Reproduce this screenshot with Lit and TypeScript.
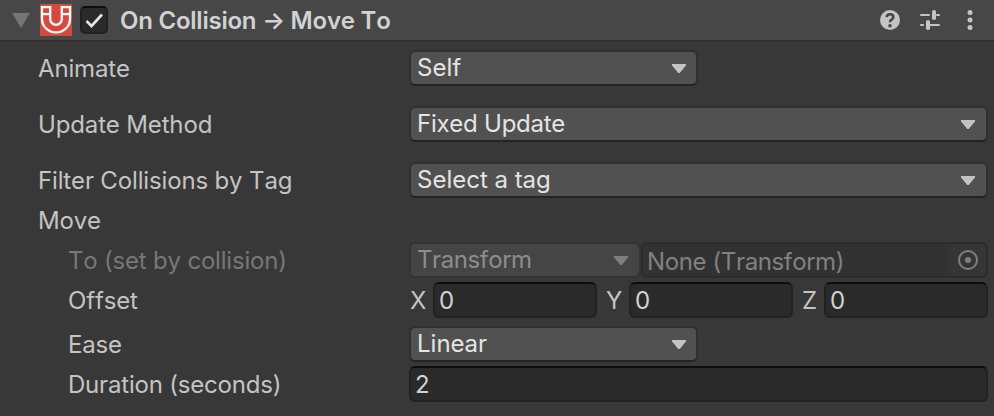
import { LitElement, html, css, svg } from "lit";
import { customElement, property } from "lit/decorators.js";

const caret = svg`<path d="M0 0H14V1.2L8.2 8.4Q7 9.6 5.8 8.4L0 1.2Z" fill="currentColor"/>`;

@customElement("drop-down")
class DropDown extends LitElement {
  @property() value = "";
  static styles = css`
    :host {
      display: flex;
      align-items: center;
      justify-content: space-between;
      box-sizing: border-box;
      height: 36px;
      padding: 0 11px 0 6px;
      border: 2px solid #303030;
      border-bottom-color: #242424;
      border-radius: 6px;
      background: #515151;
      background-clip: padding-box;
      color: #e4e4e4;
      letter-spacing: 0;
    }
    :host([disabled]) {
      border-color: #343434;
      background-color: #454545;
      color: #8d8d8d;
      letter-spacing: -0.4px;
    }
    :host([tight]) { letter-spacing: -0.25px; }
    .caret { color: #c4c4c4; display: block; }
    :host([disabled]) .caret { color: #7e7e7e; }
    .label { line-height: 32px; }
  `;
  render() {
    return html`<span class="label">${this.value}</span>
      <svg class="caret" width="14" height="9" viewBox="0 0 14 9">${caret}</svg>`;
  }
}

@customElement("input-box")
class InputBox extends LitElement {
  @property() value = "";
  static styles = css`
    :host {
      display: flex;
      align-items: center;
      box-sizing: border-box;
      height: 36px;
      padding: 2px 0 0 4px;
      border: 2px solid #212121;
      border-top-color: #0d0d0d;
      border-radius: 6px;
      background: #2a2a2a;
      color: #d2d2d2;
      line-height: 32px;
    }
  `;
  render() {
    return html`<span>${this.value}</span>`;
  }
}

@customElement("app-root")
class AppRoot extends LitElement {
  static styles = css`
    :host {
      display: block;
      width: 994px;
      height: 416px;
      overflow: hidden;
      background: #383838;
      color: #c4c4c4;
      font: 400 24px/38px Inter, "Liberation Sans", sans-serif;
      font-kerning: none;
      letter-spacing: -0.15px;
      white-space: nowrap;
    }
    .header {
      display: flex;
      align-items: center;
      box-sizing: border-box;
      height: 42px;
      padding: 0 14px 0 12px;
      border-bottom: 2px solid #303030;
      background: #474747;
    }
    .header svg { display: block; flex: none; }
    .magnet { margin-left: 10px; }
    .check {
      box-sizing: border-box;
      width: 28px;
      height: 28px;
      margin-left: 8px;
      border: 2px solid #212121;
      border-top-color: #0d0d0d;
      border-radius: 5px;
      background: #2a2a2a;
    }
    .title {
      margin-left: 12px;
      padding-top: 2px;
      flex: 1;
      font-weight: 600;
      letter-spacing: -0.23px;
      color: #d2d2d2;
    }
    .tools { display: flex; gap: 20px; }
    .body {
      display: flex;
      flex-direction: column;
      gap: 4px;
      padding: 8px 6px 0 38px;
    }
    .row {
      display: grid;
      grid-template-columns: 371px 1fr;
      height: 36px;
    }
    .roomy { margin-bottom: 16px; }
    .loose { margin-bottom: 4px; }
    .indent { padding-left: 30px; grid-template-columns: 341px 1fr; }
    .dim { color: #777; }
    .snug { letter-spacing: -0.2px; }
    .short { width: 289px; padding-right: 10px; }
    .pair { display: grid; grid-template-columns: 232px 347px; }
    .object {
      display: flex;
      justify-content: space-between;
      box-sizing: border-box;
      height: 36px;
      padding-left: 4px;
      border: 2px solid #2c2c2c;
      border-radius: 6px;
      background: #323232;
      color: #818181;
      line-height: 35px;
      letter-spacing: -0.38px;
    }
    .picker {
      display: flex;
      align-items: center;
      justify-content: center;
      width: 37px;
      background: #353535;
      border-radius: 3px;
    }
    .vector {
      display: grid;
      grid-template-columns: 24px 164px 32px 164px 31px 164px;
    }
    .axis { padding-left: 1px; }
    .axis.next { padding-left: 9px; }
  `;
  render() {
    return html`
      <div class="header">
        <svg width="18" height="16" viewBox="0 0 18 16"><path d="M0 1H18L9 16Z" fill="#757575"/></svg>
        <svg class="magnet" width="32" height="32" viewBox="0 0 32 32">
          <rect width="32" height="32" fill="#d7493f"/>
          <path d="M2 3.2H10.2V15A5.8 5.8 0 0 0 21.8 15V3.2H30V15A14 13.4 0 0 1 2 15ZM2 10.2H10.2M21.8 10.2H30" fill="none" stroke="#fff" stroke-width="2.3"/>
        </svg>
        <span class="check">
          <svg width="24" height="24" viewBox="0 0 24 24"><path d="M4.5 13L9.5 18L20 6.5" fill="none" stroke="#e6e6e6" stroke-width="2.6"/></svg>
        </span>
        <span class="title">On Collision → Move To</span>
        <span class="tools">
          <svg width="20" height="20" viewBox="0 0 20 20">
            <circle cx="10" cy="10" r="10" fill="#c4c4c4"/>
            <path d="M6.7 7.1Q6.9 4.3 10 4.3Q13.3 4.3 13.3 7Q13.3 8.5 11.8 9.4Q10 10.4 10 12.3" fill="none" stroke="#474747" stroke-width="2.6"/>
            <circle cx="10" cy="15.8" r="1.8" fill="#474747"/>
          </svg>
          <svg width="20" height="20" viewBox="0 0 20 20" fill="#c4c4c4">
            <rect y="4" width="10" height="2" rx="1"/><rect x="12" y="0" width="4" height="10" rx="1.8"/><rect x="16" y="4" width="4" height="2" rx="1"/>
            <rect y="14" width="4" height="2" rx="1"/><rect x="6" y="10" width="4" height="10" rx="1.8"/><rect x="9" y="14" width="11" height="2" rx="1"/>
          </svg>
          <svg width="20" height="20" viewBox="0 0 20 20" fill="#c4c4c4"><circle cx="10" cy="2.5" r="2.5"/><circle cx="10" cy="10" r="2.5"/><circle cx="10" cy="17.5" r="2.5"/></svg>
        </span>
      </div>
      <div class="body">
        <div class="row roomy"><span>Animate</span><drop-down class="short" value="Self"></drop-down></div>
        <div class="row roomy"><span>Update Method</span><drop-down tight value="Fixed Update"></drop-down></div>
        <div class="row"><span>Filter Collisions by Tag</span><drop-down value="Select a tag"></drop-down></div>
        <div class="row"><span>Move</span></div>
        <div class="row indent">
          <span class="dim snug">To (set by collision)</span>
          <div class="pair">
            <drop-down disabled value="Transform"></drop-down>
            <div class="object"><span>None (Transform)</span>
              <span class="picker"><svg width="20" height="20" viewBox="0 0 20 20"><circle cx="10" cy="10" r="9" fill="none" stroke="#7e7e7e" stroke-width="2"/><circle cx="10" cy="10" r="3" fill="#7e7e7e"/></svg></span>
            </div>
          </div>
        </div>
        <div class="row indent loose">
          <span>Offset</span>
          <div class="vector">
            <span class="axis">X</span><input-box value="0"></input-box>
            <span class="axis next">Y</span><input-box value="0"></input-box>
            <span class="axis next">Z</span><input-box value="0"></input-box>
          </div>
        </div>
        <div class="row indent"><span>Ease</span><drop-down class="short" value="Linear"></drop-down></div>
        <div class="row indent"><span class="snug">Duration (seconds)</span><input-box value="2"></input-box></div>
      </div>
    `;
  }
}
